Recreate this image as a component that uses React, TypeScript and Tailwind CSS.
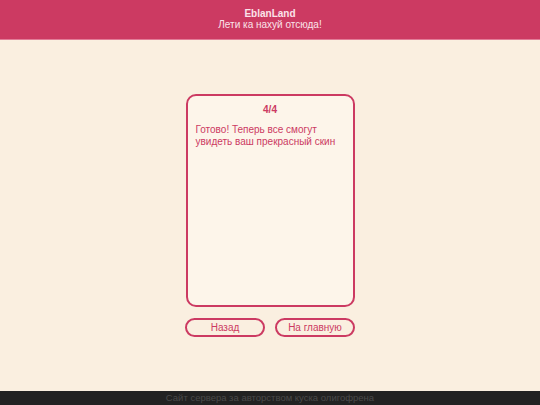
export default function App() {
  return (
    <div className="min-h-screen flex flex-col bg-[#faefe0]" style={{ fontFamily: '"Liberation Sans", Arial, sans-serif' }}>
      <header className="h-[40px] bg-[#cc3a62] border-b border-[#e27c97] flex flex-col items-center justify-center text-[#fbe3ea] leading-[12px]">
        <div className="text-[10px] font-bold">EblanLand</div>
        <div className="text-[10px] mt-[-1px]">Лети ка нахуй отсюда!</div>
      </header>
      <main className="flex-1 flex flex-col items-center justify-center gap-[11px]">
        <div className="w-[169px] h-[213px] border-2 border-[#cc3a62] rounded-[10px] bg-[#fdf5ea] px-[8px] pt-[8px] text-[#cc3a62]">
          <div className="text-center text-[10px] font-bold leading-[12px]">4/4</div>
          <div className="mt-[8px] text-[10px] leading-[12px]">Готово! Теперь все смогут увидеть ваш прекрасный скин</div>
        </div>
        <div className="flex gap-[10px]">
          <button className="w-[80px] h-[19px] rounded-full border-2 border-[#cc3a62] text-[#cc3a62] text-[10px] bg-transparent">Назад</button>
          <button className="w-[80px] h-[19px] rounded-full border-2 border-[#cc3a62] text-[#cc3a62] text-[10px] bg-transparent">На главную</button>
        </div>
      </main>
      <footer className="h-[14px] bg-[#222222] flex items-center justify-center text-[9.5px] text-[#4a4a4a] leading-[14px]">
        Сайт сервера за авторством куска олигофрена
      </footer>
    </div>
  );
}
